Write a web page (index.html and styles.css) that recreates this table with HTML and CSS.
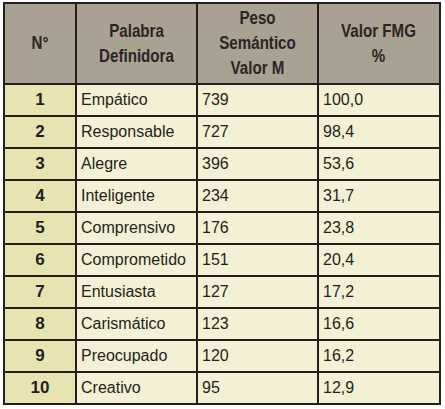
FILE: index.html
```html
<!DOCTYPE html>
<html lang="es">
<head>
<meta charset="utf-8">
<link rel="stylesheet" href="styles.css">
</head>
<body>
<table class="tabla">
  <colgroup>
    <col class="c-num"><col class="c-pal"><col class="c-peso"><col class="c-fmg">
  </colgroup>
  <thead>
    <tr>
      <th><span class="hd">N°</span></th>
      <th><span class="hd">Palabra<br>Definidora</span></th>
      <th><span class="hd">Peso<br>Semántico<br>Valor M</span></th>
      <th><span class="hd">Valor FMG<br>%</span></th>
    </tr>
  </thead>
  <tbody>
    <tr><td class="num">1</td><td>Empático</td><td>739</td><td>100,0</td></tr>
    <tr><td class="num">2</td><td>Responsable</td><td>727</td><td>98,4</td></tr>
    <tr><td class="num">3</td><td>Alegre</td><td>396</td><td>53,6</td></tr>
    <tr><td class="num">4</td><td>Inteligente</td><td>234</td><td>31,7</td></tr>
    <tr><td class="num">5</td><td>Comprensivo</td><td>176</td><td>23,8</td></tr>
    <tr><td class="num">6</td><td>Comprometido</td><td>151</td><td>20,4</td></tr>
    <tr><td class="num">7</td><td>Entusiasta</td><td>127</td><td>17,2</td></tr>
    <tr><td class="num">8</td><td>Carismático</td><td>123</td><td>16,6</td></tr>
    <tr><td class="num">9</td><td>Preocupado</td><td>120</td><td>16,2</td></tr>
    <tr><td class="num">10</td><td>Creativo</td><td>95</td><td>12,9</td></tr>
  </tbody>
</table>
</body>
</html>
```

FILE: styles.css
```css
html, body {
  margin: 0;
  padding: 0;
  background: #ffffff;
}
body {
  padding: 2px 0 0 3px;
  font-family: "Liberation Sans", Arial, sans-serif;
  color: #231f20;
}
.tabla {
  border-collapse: collapse;
  table-layout: fixed;
  width: 436px;
}
.c-num { width: 72px; }
.c-pal { width: 121px; }
.c-peso { width: 121px; }
.c-fmg { width: 122px; }
.tabla th, .tabla td {
  border: 2px solid #231f20;
  padding: 0;
}
.tabla th {
  background: #a9a192;
  height: 79px;
  font-family: "Liberation Sans", Arial, sans-serif;
  font-weight: bold;
  font-size: 18px;
  line-height: 25px;
  text-align: center;
  vertical-align: middle;
  color: #2a2626;
}
.hd {
  display: inline-block;
  transform: scaleX(0.84);
}
.tabla td {
  background: #f3f0d6;
  height: 30px;
  font-size: 16px;
  padding-left: 4px;
  vertical-align: middle;
}
.tabla td.num {
  background: #e8e4b1;
  text-align: center;
  font-weight: bold;
  font-size: 17px;
  padding-left: 0;
}
```
